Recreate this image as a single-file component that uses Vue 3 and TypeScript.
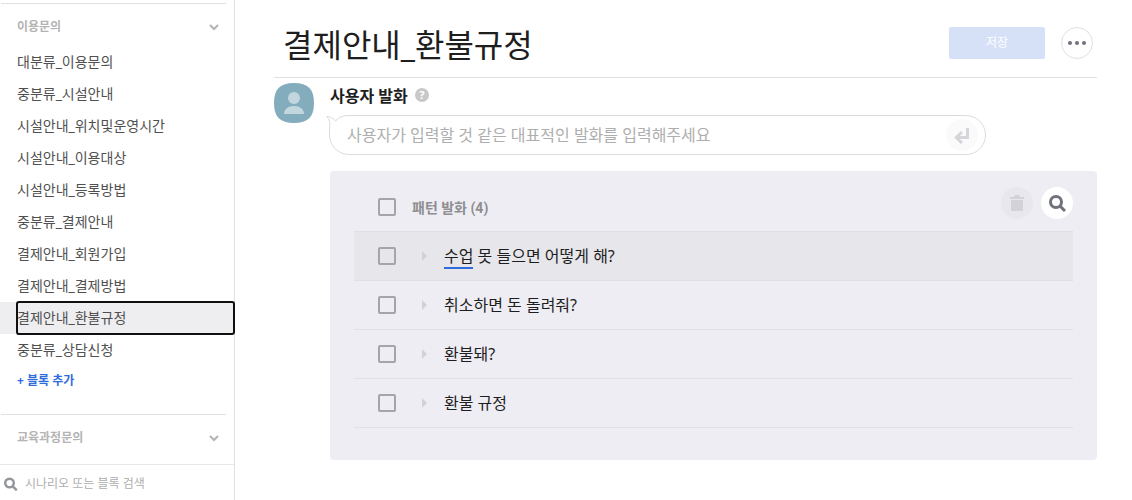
<script setup lang="ts">
import { ref } from 'vue'

interface Utterance {
  id: number
  entity: string
  text: string
  checked: boolean
}

const blocks: string[] = [
  '대분류_이용문의',
  '중분류_시설안내',
  '시설안내_위치및운영시간',
  '시설안내_이용대상',
  '시설안내_등록방법',
  '중분류_결제안내',
  '결제안내_회원가입',
  '결제안내_결제방법',
  '결제안내_환불규정',
  '중분류_상담신청',
]
const current = ref('결제안내_환불규정')
const keyword = ref('')
const draft = ref('')
const allChecked = ref(false)

const utterances = ref<Utterance[]>([
  { id: 1, entity: '수업', text: ' 못 들으면 어떻게 해?', checked: false },
  { id: 2, entity: '', text: '취소하면 돈 돌려줘?', checked: false },
  { id: 3, entity: '', text: '환불돼?', checked: false },
  { id: 4, entity: '', text: '환불 규정', checked: false },
])

function toggleAll(): void {
  utterances.value.forEach((u) => (u.checked = allChecked.value))
}
</script>

<template>
  <div class="layout">
    <aside class="sidebar">
      <nav class="scenarios">
        <section class="scenario">
          <button type="button" class="scenario-head">
            <span>이용문의</span>
            <svg width="10" height="7" viewBox="0 0 10 7"><path d="M1 1l4 4 4-4" /></svg>
          </button>
          <ul class="blocks">
            <li v-for="name in blocks" :key="name" :class="{ active: name === current }">
              <a href="#" @click.prevent="current = name">{{ name }}</a>
            </li>
          </ul>
          <button type="button" class="add">+ 블록 추가</button>
        </section>
        <section class="scenario">
          <button type="button" class="scenario-head">
            <span>교육과정문의</span>
            <svg width="10" height="7" viewBox="0 0 10 7"><path d="M1 1l4 4 4-4" /></svg>
          </button>
        </section>
      </nav>
      <label class="search">
        <svg width="14" height="14" viewBox="0 0 14 14">
          <circle cx="5.5" cy="6" r="4.3" />
          <path d="M8.8 9.300l4 4" />
        </svg>
        <input v-model="keyword" type="text" placeholder="시나리오 또는 블록 검색" aria-label="시나리오 또는 블록 검색" />
      </label>
    </aside>

    <main class="main">
      <header class="page-head">
        <h1>{{ current }}</h1>
        <button type="button" class="save" disabled>저장</button>
        <button type="button" class="more" aria-label="더보기">
          <svg width="18" height="4" viewBox="0 0 18 4">
            <circle cx="2" cy="2" r="2" /><circle cx="9" cy="2" r="2" /><circle cx="16" cy="2" r="2" />
          </svg>
        </button>
      </header>

      <div class="content">
        <svg class="avatar" width="40" height="40" viewBox="0 0 40 40">
          <path d="M20 0C34 0 40 6 40 20S34 40 20 40 0 34 0 20 6 0 20 0z" fill="#83adbc" />
          <circle cx="20" cy="15" r="6" fill="#c1d6dd" />
          <path d="M10 31c0-5 4-8 10-8s10 3 10 8z" fill="#c1d6dd" />
        </svg>
        <section class="speech">
          <div class="speech-head">
            <h2 id="speech-title">사용자 발화</h2>
            <button type="button" class="help" aria-label="도움말">?</button>
          </div>

          <form class="bubble" @submit.prevent>
            <svg class="tail" width="22" height="21" viewBox="0 0 22 21">
              <path d="M22 .5C16.500 .5 12.500 2.500 9.700 6 7.500 3.700 4.500 1.700 .8 1.300 3.500 4.500 4.300 8 3.600 13 3.400 16 3.500 18 3.500 21" />
            </svg>
            <input v-model="draft" type="text" aria-labelledby="speech-title" placeholder="사용자가 입력할 것 같은 대표적인 발화를 입력해주세요" />
            <button type="submit" aria-label="입력">
              <svg width="16" height="17" viewBox="0 0 16 17">
                <path d="M13.500 1v9.500H3M8 5L2.300 10.500 8 16" />
              </svg>
            </button>
          </form>

          <div class="panel">
            <div class="panel-head">
              <input id="all" v-model="allChecked" type="checkbox" class="check" @change="toggleAll" />
              <label for="all">패턴 발화 ({{ utterances.length }})</label>
              <button type="button" class="round trash" aria-label="삭제" disabled>
                <svg width="14" height="16" viewBox="0 0 14 16">
                  <path d="M0 2h4l1-2h4l1 2h4v2H0zM1 5h12v10q0 1-1 1H2q-1 0-1-1z" />
                </svg>
              </button>
              <button type="button" class="round find" aria-label="검색">
                <svg width="18" height="18" viewBox="0 0 18 18">
                  <circle cx="8" cy="8" r="5.500" />
                  <path d="M12 12l5 5" />
                </svg>
              </button>
            </div>
            <ul class="rows">
              <li v-for="(u, i) in utterances" :key="u.id" :class="{ hover: i === 0 }">
                <input :id="'u' + u.id" v-model="u.checked" type="checkbox" class="check" />
                <svg class="arrow" width="6" height="10" viewBox="0 0 6 10"><path d="M0 0l5 5-5 5z" /></svg>
                <label :for="'u' + u.id"><span v-if="u.entity" class="entity">{{ u.entity }}</span>{{ u.text }}</label>
              </li>
            </ul>
          </div>
        </section>
      </div>
    </main>
  </div>
</template>

<style>
body {
  margin: 0;
  background: #fff;
}
</style>

<style scoped>
.layout,
.layout * {
  box-sizing: border-box;
}
.layout {
  display: flex;
  height: 100vh;
  overflow: hidden;
  font-family: 'Noto Sans', 'Noto Sans CJK KR', sans-serif;
  color: #1e1e1e;
}
button,
input {
  font-family: inherit;
  margin: 0;
  padding: 0;
  border: 0;
  background: none;
}
ul {
  list-style: none;
  margin: 0;
  padding: 0;
}
h1,
h2 {
  margin: 0;
}
svg {
  display: block;
  flex: none;
}

.sidebar {
  display: flex;
  flex-direction: column;
  flex: none;
  width: 235px;
  border-right: 1px solid #e1e1e4;
}
.scenarios {
  flex: 1;
  min-height: 0;
  padding-top: 3px;
}
.scenario {
  padding-bottom: 20px;
}
.scenario-head {
  display: flex;
  align-items: center;
  justify-content: space-between;
  width: 225px;
  height: 43px;
  margin-left: 1px;
  padding: 4px 7px 0 16px;
  border-top: 1px solid #e1e1e4;
  font-size: 12px;
  font-weight: 700;
  color: #b4b4b4;
}
.scenario-head span {
  padding-bottom: 2px;
}
.scenario-head svg {
  fill: none;
  stroke: #b4b4b4;
  stroke-width: 2;
}
.blocks li {
  padding-left: 17px;
}
.blocks a {
  display: block;
  font-size: 14px;
  line-height: 32px;
  color: #505050;
  text-decoration: none;
}
.blocks .active {
  background: #eeeef0;
}
.blocks .active a {
  outline: 2px solid #101010;
  outline-offset: -1px;
  border-radius: 2px;
}
.add {
  display: block;
  height: 28px;
  margin-left: 17px;
  font-size: 12px;
  font-weight: 700;
  color: #2f6cdb;
}
.search {
  display: flex;
  align-items: center;
  gap: 7px;
  height: 36px;
  padding: 2px 0 0 4px;
  border-top: 1px solid #e8e8ea;
}
.search svg {
  fill: none;
  stroke: #93959b;
  stroke-width: 2.4;
}
.search input {
  flex: 1;
  min-width: 0;
  font-size: 12px;
  outline: none;
}
.search input::placeholder {
  color: #aeaeae;
  opacity: 1;
}

.main {
  flex: 1;
  min-width: 0;
  padding: 0 35px 0 39px;
}
.page-head {
  display: flex;
  align-items: center;
  height: 78px;
  padding: 9px 4px 0 9px;
  border-bottom: 1px solid #e1e1e4;
}
.page-head h1 {
  flex: 1;
  padding-top: 4px;
  font-size: 32px;
  font-weight: 400;
  line-height: 48px;
}
.save {
  width: 96px;
  height: 32px;
  padding-bottom: 2px;
  border-radius: 2px;
  background: #d6e1f8;
  color: #fff;
  font-size: 12px;
}
.more {
  display: grid;
  place-items: center;
  width: 32px;
  height: 32px;
  margin-left: 16px;
  border: 1px solid #e1e1e4;
  border-radius: 50%;
  fill: #6f717b;
}

.content {
  display: flex;
  gap: 16px;
  padding-top: 5px;
}
.speech {
  flex: 1;
  min-width: 0;
}
.speech-head {
  display: flex;
  align-items: center;
  gap: 7px;
  height: 24px;
  margin-bottom: 8px;
}
.speech-head h2 {
  font-size: 16px;
  font-weight: 700;
}
.help {
  width: 14px;
  height: 14px;
  border-radius: 50%;
  background: #c8c8c8;
  color: #fff;
  font-size: 11px;
  font-weight: 700;
  line-height: 14px;
}
.bubble {
  position: relative;
  display: flex;
  align-items: center;
  max-width: 657px;
  height: 40px;
  margin-left: -1px;
  padding: 0 7px 0 17px;
  border: 1px solid #dcdcdf;
  border-radius: 20px;
}
.tail {
  position: absolute;
  left: -4px;
  top: -1px;
  fill: #fff;
  stroke: #dcdcdf;
}
.bubble input {
  flex: 1;
  min-width: 0;
  font-size: 16px;
  outline: none;
}
.bubble input::placeholder {
  color: #aeaeae;
  opacity: 1;
}
.bubble button {
  display: grid;
  place-items: center;
  width: 32px;
  height: 32px;
  border-radius: 50%;
  background: #fafafa;
}
.bubble button svg {
  fill: none;
  stroke: #d5d6da;
  stroke-width: 3;
}

.panel {
  margin-top: 16px;
  padding: 0 24px 32px;
  border-radius: 4px;
  background: #eeedf3;
}
.panel-head {
  display: flex;
  align-items: center;
  height: 60px;
  padding: 12px 0 0 24px;
}
.panel-head label {
  flex: 1;
  margin-left: 16px;
  font-family: Roboto, 'Noto Sans CJK KR', sans-serif;
  font-size: 14px;
  font-weight: 700;
  color: #8e8e92;
}
.check {
  appearance: none;
  flex: none;
  width: 18px;
  height: 18px;
  border: 2px solid #a5a4a9;
  border-radius: 2px;
}
.check:checked {
  background: #a5a4a9;
}
.round {
  display: grid;
  place-items: center;
  align-self: flex-start;
  width: 32px;
  height: 32px;
  margin: 4px 0 0 8px;
  border-radius: 50%;
}
.trash {
  background: #e8e7ed;
  fill: #d2d2d8;
}
.find {
  background: #fff;
  fill: none;
  stroke: #6f717b;
  stroke-width: 3;
}
.rows {
  border-top: 1px solid #e1e0e5;
}
.rows li {
  display: flex;
  align-items: center;
  height: 49px;
  padding-left: 24px;
  border-bottom: 1px solid #e1e0e5;
}
.rows .hover {
  background: #e7e6eb;
}
.arrow {
  margin: 0 16px 0 26px;
  fill: #d2d1d7;
}
.rows label {
  font-size: 16px;
  line-height: 24px;
}
.entity {
  box-shadow: 0 2px 0 #2f6cdb;
}
</style>
